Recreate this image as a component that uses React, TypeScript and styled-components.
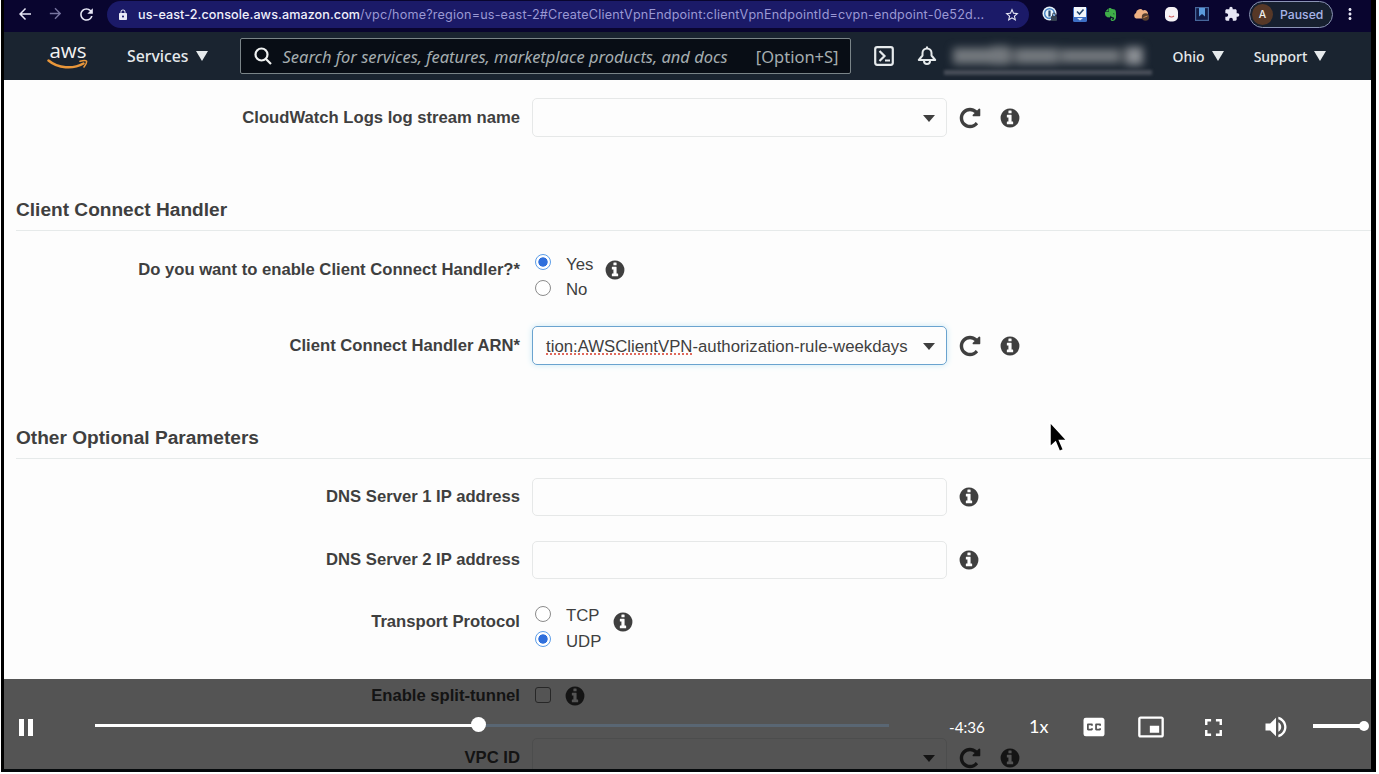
import React from "react";
import styled, { createGlobalStyle } from "styled-components";
import {
  MdArrowBack,
  MdArrowForward,
  MdRefresh,
  MdLock,
  MdStarBorder,
  MdExtension,
  MdMoreVert,
  MdClosedCaption,
  MdFullscreen,
  MdPictureInPictureAlt,
  MdVolumeUp,
} from "react-icons/md";
import { FaEvernote } from "react-icons/fa";

const GlobalStyle = createGlobalStyle`
  * { box-sizing: border-box; }
  html, body { margin: 0; padding: 0; background: #fff; }
  body { overflow: hidden; font-family: "Liberation Sans", Arial, sans-serif; color: #3f3f3f; }
  svg { display: block; flex: none; }
`;

const Frame = styled.div`
  position: relative;
  width: 1375px;
  height: 772px;
  margin-left: 1px;
  border: solid #000;
  border-width: 0 5px 3px 3px;
  border-bottom-color: #05090b;
  box-shadow: 0 1px 0 #777;
  overflow: hidden;
  display: flex;
  flex-direction: column;
  background: #fdfdfd;
`;

/* ---------- browser toolbar ---------- */

const BrowserBar = styled.div`
  flex: none;
  height: 32px;
  padding: 0 12px 4px 12px;
  display: flex;
  align-items: center;
  background: #09052f;
  color: #e8e8f6;
  font-family: Inter, sans-serif;
`;

const NavButtons = styled.div`
  display: flex;
  gap: 13px;
  width: 91px;
  .dim { color: #7775a0; }
`;

const AddressBar = styled.div`
  width: 922px;
  height: 27px;
  border-radius: 14px;
  padding: 1px 8px 0 10px;
  display: flex;
  align-items: center;
  background: #1b1a68;
`;

const Url = styled.div`
  width: 866px;
  margin-left: 9px;
  font-size: 12.6px;
  letter-spacing: 0.19px;
  white-space: nowrap;
  color: #9a98d4;
  b { font-weight: 500; letter-spacing: 0.08px; color: #f0f0fb; }
`;

const Extensions = styled.div`
  display: grid;
  grid-template-columns: repeat(7, 30.3px);
  align-items: center;
  justify-items: center;
  margin-left: 6px;
`;

const Profile = styled.div`
  width: 84px;
  height: 27px;
  margin-left: 2px;
  border: 1.5px solid #8a93b4;
  border-radius: 14px;
  display: flex;
  align-items: center;
  gap: 7px;
  padding-left: 2px;
  background: #17202f;
  color: #a7b4e8;
  font-size: 12.2px;
  font-weight: 500;
`;

const Avatar = styled.span`
  width: 21px;
  height: 21px;
  border-radius: 50%;
  background: #573827;
  color: #eee;
  font-size: 10.5px;
  display: flex;
  align-items: center;
  justify-content: center;
`;

/* ---------- console header ---------- */

const ConsoleBar = styled.header`
  flex: none;
  height: 48px;
  display: flex;
  align-items: center;
  padding-left: 43px;
  background: #1a2430;
  color: #e6eaec;
  font-family: "Noto Sans", "Open Sans", sans-serif;
  font-size: 16.5px;
`;

const Logo = styled.div`
  width: 42px;
  height: 30px;
  display: flex;
  flex-direction: column;
  align-items: center;
  font-family: "Open Sans", "Noto Sans", sans-serif;
  font-size: 20.5px;
  font-weight: 500;
  line-height: 18px;
  color: #f2f2f2;
`;

const MenuItem = styled.div<{ $left: number; $size?: number }>`
  display: flex;
  align-items: center;
  gap: 7px;
  margin-left: ${(p) => p.$left}px;
  font-size: ${(p) => p.$size ?? 14}px;
  font-weight: 500;
  white-space: nowrap;
`;

const Triangle = styled.span<{ $w?: number; $h?: number }>`
  border: solid transparent;
  border-width: ${(p) => p.$h ?? 10}px ${(p) => p.$w ?? 6}px 0;
  border-top-color: currentColor;
`;

const SearchBox = styled.div`
  flex: none;
  width: 611px;
  height: 36px;
  margin-left: 32px;
  padding: 0 11px 0 13px;
  display: flex;
  align-items: center;
  background: #080d15;
  border: 1px solid #7a8488;
  border-radius: 2px;
  color: #a5adb0;
  white-space: nowrap;
`;

const Placeholder = styled.span`
  flex: 1;
  margin-left: 11px;
  font-style: italic;
  font-size: 16.47px;
`;

const HeaderIcons = styled.div`
  display: flex;
  align-items: center;
  gap: 23px;
  margin-left: 23px;
`;

const Account = styled.div`
  width: 212px;
  height: 40px;
  margin-left: 5px;
  display: flex;
  flex-direction: column;
  justify-content: space-between;
  align-items: center;
  padding-top: 10px;
`;

const AccountName = styled.div`
  display: flex;
  align-items: center;
  filter: blur(4.5px);
`;

const Smudge = styled.i<{ $w: number; $h?: number; $c?: string }>`
  width: ${(p) => p.$w}px;
  height: ${(p) => p.$h ?? 16}px;
  background: ${(p) => p.$c ?? "#74797e"};
`;

const AccountLine = styled.div`
  width: 208px;
  height: 5px;
  background: #484e58;
  filter: blur(1.5px);
  margin-bottom: 1px;
`;

/* ---------- form ---------- */

const Form = styled.main`
  flex: none;
  padding-top: 18px;
  display: flex;
  flex-direction: column;
`;

const Row = styled.div<{ $h: number; $after?: number }>`
  height: ${(p) => p.$h}px;
  margin-bottom: ${(p) => p.$after ?? 0}px;
  display: flex;
  align-items: center;
`;

const Label = styled.label`
  width: 516px;
  margin-right: 11px;
  padding-top: 0.6px;
  text-align: right;
  font-size: 16.65px;
  font-weight: 700;
  white-space: nowrap;
`;

const SectionTitle = styled.h2<{ $after?: number }>`
  height: 94px;
  margin: 0 0 ${(p) => p.$after ?? 0}px 12px;
  padding-bottom: 9px;
  display: flex;
  align-items: flex-end;
  border-bottom: 1.5px solid #e6eaea;
  font-size: 19.1px;
  line-height: 22px;
  font-weight: 700;
`;

const Field = styled.div<{ $focus?: boolean; $h?: number }>`
  width: 415px;
  height: ${(p) => p.$h ?? 39}px;
  margin: 0 1px;
  padding: 1px 11px 0 13px;
  display: flex;
  align-items: center;
  justify-content: space-between;
  border: 1px solid ${(p) => (p.$focus ? "#6aa3cf" : "#e6e8e8")};
  border-radius: 5px;
  box-shadow: ${(p) => (p.$focus ? "0 0 6px #c9e9f5" : "none")};
  font-size: 16.75px;
  white-space: nowrap;
`;

const FieldValue = styled.span`
  padding-top: 1px;
`;

const Misspelt = styled.span`
  text-decoration: underline dotted #e0685c 2px;
  text-underline-offset: 2px;
  text-decoration-skip-ink: none;
`;

const Push = styled.span`
  margin-left: auto;
  display: flex;
`;

const Actions = styled.div`
  display: flex;
  align-items: center;
  gap: 17px;
  margin-left: 10px;
`;

const RadioGroup = styled.div`
  padding-top: 10px;
  margin: 0 11px 0 4px;
`;

const Option = styled.div`
  height: 25.5px;
  display: flex;
  align-items: center;
  font-size: 16.75px;
  span { padding-top: 5px; }
`;

const Radio = styled.i<{ $on?: boolean }>`
  width: 16px;
  height: 16px;
  margin-right: 15px;
  border-radius: 50%;
  border: 1px solid ${(p) => (p.$on ? "#5c9de8" : "#8b8b8b")};
  background: ${(p) => (p.$on ? "radial-gradient(circle, #2f6fdc 4.3px, #fff 5px)" : "#fff")};
`;

const Checkbox = styled.i`
  width: 16px;
  height: 16px;
  margin: 0 13px 3px 4px;
  border: 1px solid #777;
  border-radius: 3px;
`;

/* ---------- overlays ---------- */

const Pointer = styled.div`
  position: absolute;
  left: 1044px;
  top: 420px;
`;

const Player = styled.div`
  position: absolute;
  left: 0;
  right: 0;
  bottom: 0;
  height: 90px;
  padding: 6px 0 0 15px;
  display: flex;
  align-items: center;
  background: rgba(0, 0, 0, 0.672);
  color: #fff;
  font-family: Lato, sans-serif;
`;

const PauseIcon = styled.div`
  width: 14px;
  height: 17px;
  border: solid #fff;
  border-width: 0 5px;
`;

const Track = styled.div`
  width: 794px;
  height: 3px;
  margin: 0 0 3px 62px;
  display: flex;
  align-items: center;
  background: #596673;
`;

const Played = styled.div`
  width: 384px;
  height: 3px;
  background: #fff;
`;

const Knob = styled.i<{ $d: number; $shift: number; $lift?: number }>`
  flex: none;
  width: ${(p) => p.$d}px;
  height: ${(p) => p.$d}px;
  margin: 0 0 ${(p) => p.$lift ?? 0}px ${(p) => p.$shift}px;
  border-radius: 50%;
  background: #fff;
`;

const Time = styled.span`
  width: 80px;
  margin-left: 60px;
  font-size: 15.2px;
`;

const Speed = styled.span`
  width: 36.5px;
  padding-bottom: 2px;
  font-size: 18px;
`;

const Controls = styled.div`
  display: grid;
  grid-template-columns: 57.5px 55.5px 69px 57px;
  align-items: center;
  justify-items: center;
`;

const VolumeBar = styled.div`
  width: 51px;
  height: 4px;
  margin: 0 0 3px 8px;
  display: flex;
  align-items: center;
  background: #fff;
`;

const InfoIcon = () => (
  <svg width="22" height="22" viewBox="0 0 1792 1792" fill="currentColor">
    <path d="M1152 1376v-160q0-14-9-23t-23-9h-96v-512q0-14-9-23t-23-9h-320q-14 0-23 9t-9 23v160q0 14 9 23t23 9h96v320h-96q-14 0-23 9t-9 23v160q0 14 9 23t23 9h448q14 0 23-9t9-23zm-128-896v-160q0-14-9-23t-23-9h-192q-14 0-23 9t-9 23v160q0 14 9 23t23 9h192q14 0 23-9t9-23zm640 416q0 209-103 385.500t-279.500 279.500-385.500 103-385.500-103-279.500-279.500-103-385.500 103-385.500 279.500-279.500 385.500-103 385.500 103 279.500 279.500 103 385.500z" />
  </svg>
);

const ReloadIcon = () => (
  <svg width="24" height="24" viewBox="0 0 1792 1792" fill="currentColor">
    <path d="M1664 256v448q0 26-19 45t-45 19h-448q-42 0-59-40-17-39 14-69l138-138q-148-137-349-137-104 0-198.500 40.500t-163.500 109.500-109.500 163.500-40.500 198.500 40.500 198.500 109.500 163.500 163.500 109.500 198.500 40.500q119 0 225-52t179-147q7-10 23-12 15 0 25 9l137 138q9 8 9.500 20.500t-7.500 22.500q-109 132-264 204.500t-327 72.500q-156 0-298-61t-245-164-164-245-61-298 61-298 164-245 245-164 298-61q147 0 284.500 55.500t244.500 156.500l130-129q29-31 70-14 39 17 39 59z" />
  </svg>
);

const Smile = () => (
  <svg width="42" height="11" viewBox="0 0 42 11">
    <path d="M1.500 1.500C11 9.500 26 10.500 36.500 4.500" fill="none" stroke="#e8963a" strokeWidth="2.500" strokeLinecap="round" />
    <path d="M33 2.200C36 1.400 39 1.400 39.500 2.200C40 3.200 38.500 6 37 8" fill="none" stroke="#e8963a" strokeWidth="1.600" strokeLinecap="round" />
  </svg>
);

const SearchIcon = () => (
  <svg width="18" height="18" viewBox="0 0 18 18" fill="none" stroke="#f0f2f2" strokeWidth="2.200">
    <circle cx="7.500" cy="7.500" r="6" />
    <path d="M12 12l5 5" />
  </svg>
);

const ShellIcon = () => (
  <svg width="20" height="20" viewBox="0 0 20 20" fill="none" stroke="currentColor" strokeWidth="2.200">
    <rect x="1.200" y="1.200" width="17.600" height="17.600" rx="2" />
    <path d="M5.500 5l5 5-5 5M11 14.500h5" />
  </svg>
);

const BellIcon = () => (
  <svg width="20" height="20" viewBox="0 0 20 20" fill="none" stroke="currentColor" strokeWidth="2" strokeLinejoin="round">
    <path d="M10 .5v2M1.800 14L5.500 9.500V7a4.500 4.500 0 0 1 9 0v2.500L18.200 14z" />
    <path d="M7 14.500v.5a3 3 0 0 0 6 0v-.5" />
  </svg>
);

const PasswordExt = () => (
  <svg width="16" height="16" viewBox="0 0 16 16">
    <circle cx="7.500" cy="7.500" r="7" fill="#e6f1f8" />
    <circle cx="7.500" cy="7.500" r="4.800" fill="none" stroke="#4582c4" strokeWidth="1.400" />
    <rect x="6.400" y="4.500" width="2.200" height="6" fill="#24466f" />
    <rect x="9" y="10" width="6" height="5" rx="1" fill="#34404f" />
    <path d="M10.500 10V8.500a1.500 1.500 0 0 1 3 0V10" fill="none" stroke="#34404f" />
  </svg>
);

const CheckExt = () => (
  <svg width="14" height="15" viewBox="0 0 14 15">
    <rect width="14" height="15" rx="1.500" fill="#3d6fc4" />
    <rect x="1" y="0" width="12" height="10" fill="#f3f7fa" />
    <path d="M4 4.500l2.500 2.500L10.500 2.500" fill="none" stroke="#24466f" strokeWidth="1.600" />
    <path d="M4 11h6l-3 2.500z" fill="#dbe7f5" />
  </svg>
);

const CloudExt = () => (
  <svg width="17" height="13" viewBox="0 0 17 13">
    <path d="M3 10.500a3 3 0 0 1 0-5.500 4 4 0 0 1 7-2.500A3.500 3.500 0 0 1 15 6v4.500z" fill="#eeb183" />
    <circle cx="12.500" cy="9" r="3.700" fill="#58402f" />
    <path d="M10.500 9.500l4-1.500" stroke="#d98b50" />
  </svg>
);

const FaceExt = () => (
  <svg width="13" height="15" viewBox="0 0 13 15">
    <rect width="13" height="14.500" rx="5" fill="#f6f3f6" />
    <path d="M4 9q2.500 2 5 0" fill="none" stroke="#d2605f" strokeWidth="1.200" />
  </svg>
);

const BookmarkExt = () => (
  <svg width="14" height="14" viewBox="0 0 14 14">
    <rect x=".6" y=".6" width="12.800" height="12.800" fill="#101b46" stroke="#47679b" strokeWidth="1.200" />
    <path d="M4 1h6v8.500L7 7l-3 2.500z" fill="#5b9bdc" />
  </svg>
);

const Info = () => (
  <Actions>
    <InfoIcon />
  </Actions>
);

const ReloadAndInfo = () => (
  <Actions>
    <ReloadIcon />
    <InfoIcon />
  </Actions>
);

const Caret = () => (
  <Push>
    <Triangle $w={6.5} $h={7} />
  </Push>
);

export default function App() {
  return (
    <>
      <GlobalStyle />
      <Frame>
        <BrowserBar>
          <NavButtons>
            <MdArrowBack size={18} />
            <MdArrowForward size={17} className="dim" />
            <MdRefresh size={19} />
          </NavButtons>
          <AddressBar>
            <MdLock size={12} />
            <Url>
              <b>us-east-2.console.aws.amazon.com</b>
              /vpc/home?region=us-east-2#CreateClientVpnEndpoint:clientVpnEndpointId=cvpn-endpoint-0e52d...
            </Url>
            <MdStarBorder size={16} />
          </AddressBar>
          <Extensions>
            <PasswordExt />
            <CheckExt />
            <FaEvernote size={15} color="#3fae49" />
            <CloudExt />
            <FaceExt />
            <BookmarkExt />
            <MdExtension size={16} />
          </Extensions>
          <Profile>
            <Avatar>A</Avatar>
            Paused
          </Profile>
          <Push>
            <MdMoreVert size={18} />
          </Push>
        </BrowserBar>

        <ConsoleBar>
          <Logo>
            aws
            <Smile />
          </Logo>
          <MenuItem $left={38} $size={15.8}>
            Services
            <Triangle />
          </MenuItem>
          <SearchBox>
            <SearchIcon />
            <Placeholder>Search for services, features, marketplace products, and docs</Placeholder>
            <span>[Option+S]</span>
          </SearchBox>
          <HeaderIcons>
            <ShellIcon />
            <BellIcon />
          </HeaderIcons>
          <Account>
            <AccountName>
              <Smudge $w={38} />
              <Smudge $w={18} $h={19} />
              <Smudge $w={8} $c="#565c62" />
              <Smudge $w={40} />
              <Smudge $w={5} $c="#565c62" />
              <Smudge $w={57} $h={14} />
              <Smudge $w={7} $c="#42484f" />
              <Smudge $w={17} $h={18} $c="#8b8f94" />
            </AccountName>
            <AccountLine />
          </Account>
          <MenuItem $left={19}>
            Ohio
            <Triangle />
          </MenuItem>
          <MenuItem $left={30}>
            Support
            <Triangle />
          </MenuItem>
        </ConsoleBar>

        <Form>
          <Row $h={39}>
            <Label>CloudWatch Logs log stream name</Label>
            <Field>
              <Caret />
            </Field>
            <ReloadAndInfo />
          </Row>

          <SectionTitle>Client Connect Handler</SectionTitle>
          <Row $h={78} $after={17}>
            <Label>Do you want to enable Client Connect Handler?*</Label>
            <RadioGroup>
              <Option>
                <Radio $on />
                <span>Yes</span>
              </Option>
              <Option>
                <Radio />
                <span>No</span>
              </Option>
            </RadioGroup>
            <InfoIcon />
          </Row>
          <Row $h={39}>
            <Label>Client Connect Handler ARN*</Label>
            <Field $focus>
              <FieldValue>
                <Misspelt>tion:AWSClientVPN</Misspelt>-authorization-rule-weekdays
              </FieldValue>
              <Caret />
            </Field>
            <ReloadAndInfo />
          </Row>

          <SectionTitle $after={19}>Other Optional Parameters</SectionTitle>
          <Row $h={38} $after={25}>
            <Label>DNS Server 1 IP address</Label>
            <Field $h={38} />
            <Info />
          </Row>
          <Row $h={38} $after={4}>
            <Label>DNS Server 2 IP address</Label>
            <Field $h={38} />
            <Info />
          </Row>
          <Row $h={77} $after={17}>
            <Label>Transport Protocol</Label>
            <RadioGroup>
              <Option>
                <Radio />
                <span>TCP</span>
              </Option>
              <Option>
                <Radio $on />
                <span>UDP</span>
              </Option>
            </RadioGroup>
            <InfoIcon />
          </Row>
          <Row $h={38} $after={23}>
            <Label>Enable split-tunnel</Label>
            <Checkbox />
            <InfoIcon />
          </Row>
          <Row $h={39}>
            <Label>VPC ID</Label>
            <Field>
              <Caret />
            </Field>
            <ReloadAndInfo />
          </Row>
        </Form>

        <Pointer>
          <svg width="22" height="34" viewBox="0 0 22 34">
            <path d="M2 2v25l5.500-5 4 9.500 4-1.700-4-9.300h7.500z" fill="#000" stroke="#fff" strokeWidth="1.500" />
          </svg>
        </Pointer>

        <Player>
          <PauseIcon />
          <Track>
            <Played />
            <Knob $d={15} $shift={-8} $lift={2} />
          </Track>
          <Time>-4:36</Time>
          <Speed>1x</Speed>
          <Controls>
            <MdClosedCaption size={28} />
            <MdPictureInPictureAlt size={28} />
            <MdFullscreen size={29} />
            <MdVolumeUp size={28} />
          </Controls>
          <VolumeBar>
            <Knob $d={10} $shift={46} />
          </VolumeBar>
        </Player>
      </Frame>
    </>
  );
}
